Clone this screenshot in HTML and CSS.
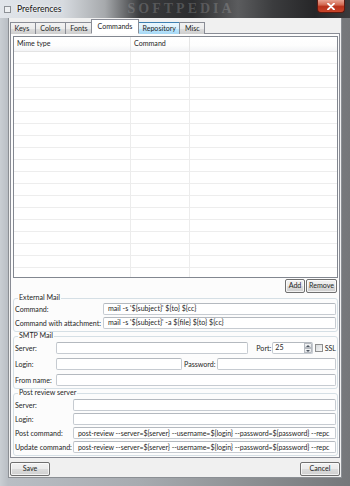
FILE: index.html
```html
<!DOCTYPE html>
<html>
<head>
<meta charset="utf-8">
<link rel="stylesheet" href="styles.css">
</head>
<body>
<div class="window">
  <div class="titlebar">
    <span class="app-icon"></span>
    <span class="title">Preferences</span>
    <span class="watermark">SOFTPEDIA</span>
    <span class="close"><svg width="10" height="7" viewBox="0 0 10 7"><path d="M2 0.5 L8 6.5 M8 0.5 L2 6.5" stroke="#fff" stroke-width="1.8" stroke-linecap="round"/></svg></span>
  </div>
  <div class="client">
    <div class="tabs">
      <div class="tab">Keys</div>
      <div class="tab">Colors</div>
      <div class="tab">Fonts</div>
      <div class="tab active">Commands</div>
      <div class="tab hover">Repository</div>
      <div class="tab">Misc</div>
    </div>
    <div class="pane">
      <div class="table">
        <div class="thead">
          <div class="th c1">Mime type</div>
          <div class="th c2">Command</div>
          <div class="th c3"></div>
        </div>
        <div class="tbody"></div>
      </div>
      <div class="btnrow">
        <button class="btn add">Add</button>
        <button class="btn remove">Remove</button>
      </div>

      <fieldset class="group ext">
        <legend>External Mail</legend>
        <div class="row">
          <span class="lbl">Command:</span>
          <span class="input grow">mail -s '${subject}' ${to} ${cc}</span>
        </div>
        <div class="row">
          <span class="lbl">Command with attachment:</span>
          <span class="input grow">mail -s '${subject}' -a ${file} ${to} ${cc}</span>
        </div>
      </fieldset>

      <fieldset class="group smtp">
        <legend>SMTP Mail</legend>
        <div class="row">
          <span class="lbl">Server:</span>
          <span class="input server"></span>
          <span class="lbl2 port">Port:</span>
          <span class="input spin">25<span class="arrows"><span class="arr up"></span><span class="arr down"></span></span></span>
          <span class="check"></span>
          <span class="ssl">SSL</span>
        </div>
        <div class="row">
          <span class="lbl">Login:</span>
          <span class="input login"></span>
          <span class="lbl2 pw">Password:</span>
          <span class="input grow"></span>
        </div>
        <div class="row">
          <span class="lbl">From name:</span>
          <span class="input grow"></span>
        </div>
      </fieldset>

      <fieldset class="group post">
        <legend>Post review server</legend>
        <div class="row">
          <span class="lbl">Server:</span>
          <span class="input grow"></span>
        </div>
        <div class="row">
          <span class="lbl">Login:</span>
          <span class="input grow"></span>
        </div>
        <div class="row">
          <span class="lbl">Post command:</span>
          <span class="input grow cmd">post-review --server=${server} --username=${login} --password=${password} --repc</span>
        </div>
        <div class="row">
          <span class="lbl">Update command:</span>
          <span class="input grow cmd">post-review --server=${server} --username=${login} --password=${password} --repc</span>
        </div>
      </fieldset>
    </div>
    <div class="footer">
      <button class="btn save">Save</button>
      <button class="btn cancel">Cancel</button>
    </div>
  </div>
</div>
</body>
</html>
```

FILE: styles.css
```css
html, body {
  margin: 0;
  padding: 0;
  background: #2b2b2b;
}
body {
  font-family: "Lato", "Liberation Sans", sans-serif;
  font-size: 7.1px;
  color: #1e1e1e;
}
.window {
  width: 350px;
  height: 486px;
  overflow: hidden;
  display: flex;
  flex-direction: column;
  background: linear-gradient(to right, #c9ced3 0px, #b9bec4 8px, #a7abb0 40%, #8e9194 70%, #75777a 100%);
}
.titlebar {
  height: 18px;
  flex: none;
  display: flex;
  align-items: center;
  position: relative;
  background: linear-gradient(to right, #e1e5ea 0%, #d6dadf 18%, #a6a9ac 30%, #3a3b3d 40%, #2c2d2f 55%, #5b5c5e 68%, #3b3c3e 78%, #262628 90%, #3a3a3c 100%);
}
.app-icon {
  width: 7px;
  height: 7px;
  margin-left: 4px;
  background: #eef0f2;
  border: 1px solid #8d9196;
  box-sizing: border-box;
}
.title {
  margin-left: 6px;
  font-size: 8.6px;
  color: #111;
  text-shadow: 0 0 4px #fff, 0 0 2px #fff;
}
.watermark {
  margin-left: 66px;
  font-family: "Liberation Serif", serif;
  font-weight: bold;
  font-size: 14px;
  letter-spacing: 3px;
  color: rgba(210, 210, 210, 0.22);
  line-height: 16px;
}
.close {
  position: absolute;
  right: 5px;
  top: 0;
  width: 28px;
  height: 13px;
  box-sizing: border-box;
  border: 1px solid #5a1a12;
  border-top: none;
  border-radius: 0 0 4px 4px;
  background: linear-gradient(to bottom, #e8a493 0%, #d36a52 40%, #b8321b 55%, #c9452a 100%);
  display: flex;
  align-items: center;
  justify-content: center;
}
.client {
  flex: 1;
  margin: 0 8px 8px 8px;
  background: #f0f0f0;
  border: 1px solid #8b8f94;
  border-top: none;
  display: flex;
  flex-direction: column;
  padding: 0 1px;
}
.tabs {
  display: flex;
  height: 15px;
  margin-top: 1px;
  align-items: flex-end;
  position: relative;
  z-index: 1;
  margin-bottom: -1px;
}
.tab {
  height: 12px;
  box-sizing: border-box;
  border: 1px solid #898c95;
  border-bottom: none;
  margin-right: -1px;
  padding: 0 4.5px;
  background: linear-gradient(to bottom, #f2f2f2 0%, #ebebeb 50%, #dddddd 51%, #cfcfcf 100%);
  line-height: 11px;
  color: #1e1e1e;
}
.tab:first-child { padding: 0 5.5px 0 3.5px; }
.tab.active {
  height: 15px;
  background: #fff;
  padding: 0 5.5px;
  line-height: 13px;
  margin-left: -1px;
  margin-right: -2px;
  border-bottom: 1px solid #fff;
  position: relative;
  z-index: 2;
}
.tab.hover {
  background: linear-gradient(to bottom, #eaf6fd 0%, #d9f0fc 50%, #bee6fd 51%, #a7d9f5 100%);
  border-color: #3c7fb1;
  padding: 0 3.5px;
  margin-left: 1px;
}
.pane {
  height: 425px;
  box-sizing: border-box;
  border: 1px solid #898c95;
  background: #fcfcfc;
  padding: 2px 1px 0 2px;
  display: flex;
  flex-direction: column;
}
.table {
  height: 242px;
  box-sizing: border-box;
  border: 1px solid #828790;
  background: #fff;
  display: flex;
  flex-direction: column;
}
.thead {
  display: flex;
  height: 14px;
  flex: none;
  border-bottom: 1px solid #e3e3e3;
  background: linear-gradient(to bottom, #ffffff 0%, #fdfdfd 60%, #f3f4f6 100%);
}
.th {
  box-sizing: border-box;
  line-height: 13px;
  padding-left: 3px;
  border-right: 1px solid #e5e5e5;
}
.c1 { width: 117px; }
.c2 { width: 59px; }
.c3 { flex: 1; border-right: none; }
.tbody {
  flex: 1;
  background-image:
    linear-gradient(to right, transparent 116px, #ececec 116px, #ececec 117px, transparent 117px, transparent 175px, #ececec 175px, #ececec 176px, transparent 176px),
    repeating-linear-gradient(to bottom, transparent 0px, transparent 11px, #ededed 11px, #ededed 12px);
}
.btnrow {
  display: flex;
  justify-content: flex-end;
  gap: 1px;
  margin-top: 1px;
  padding-right: 1px;
}
.btn {
  font-family: inherit;
  font-size: 7.1px;
  color: #1e1e1e;
  height: 14px;
  box-sizing: border-box;
  border: 1px solid #707070;
  border-radius: 2px;
  background: linear-gradient(to bottom, #f2f2f2 0%, #ebebeb 50%, #dddddd 51%, #cfcfcf 100%);
  padding: 0;
  line-height: 12px;
  box-shadow: inset 0 0 0 1px rgba(255,255,255,0.7);
}
.add { width: 20px; }
.remove { width: 31px; }
.group {
  margin: 0;
  padding: 0 1px 2px 1px;
  border: 1px solid #d5dfe5;
  border-radius: 3px;
  min-width: 0;
  display: flex;
  flex-direction: column;
  gap: 2px;
}
.group legend {
  padding: 0 1px;
  margin-left: 3px;
  line-height: 8px;
  height: 8px;
}
.group.ext { margin-top: 1px; padding-top: 1px; }
.group.smtp { padding-top: 2px; gap: 4px; }
.group.post { padding-top: 2px; }
.row {
  display: flex;
  align-items: center;
  height: 12px;
}
.lbl {
  flex: none;
  box-sizing: border-box;
  white-space: nowrap;
}
.ext .lbl { width: 88px; }
.smtp .lbl { width: 41px; }
.post .lbl { width: 58px; }
.input {
  height: 12px;
  box-sizing: border-box;
  border: 1px solid #c6cbd1;
  border-top-color: #b4b9bf;
  border-radius: 2px;
  background: #fff;
  padding-left: 4px;
  line-height: 10px;
  white-space: nowrap;
  overflow: hidden;
  color: #1e1e1e;
  min-width: 0;
}
.cmd { font-size: 7px; letter-spacing: -0.05px; }
.grow { flex: 1; }
.server { width: 195px; }
.lbl2 { white-space: nowrap; flex: none; }
.port { margin-left: 8px; margin-right: 1px; }
.spin {
  width: 41px;
  position: relative;
  padding-left: 2px;
}
.arrows {
  position: absolute;
  right: 0;
  top: 0;
  bottom: 0;
  width: 8px;
  display: flex;
  flex-direction: column;
}
.arr {
  flex: 1;
  border: 1px solid #b6bac0;
  background: linear-gradient(to bottom, #f4f5f6, #dfe2e5);
  position: relative;
}
.arr::after {
  content: "";
  position: absolute;
  left: 1px;
  top: 1px;
  border-left: 2px solid transparent;
  border-right: 2px solid transparent;
}
.up::after { border-bottom: 2px solid #4d5560; }
.down::after { border-top: 2px solid #4d5560; }
.check {
  width: 8px;
  height: 8px;
  box-sizing: border-box;
  border: 1px solid #8e8f8f;
  background: linear-gradient(to bottom right, #d6d9dc, #f7f7f7);
  margin-left: 2px;
}
.ssl { margin-left: 2px; }
.login { width: 126px; }
.pw { margin-left: 2px; margin-right: 1px; }
.footer {
  display: flex;
  justify-content: space-between;
  margin-top: 4px;
}
.save { width: 40px; }
.cancel { width: 40px; }
```
